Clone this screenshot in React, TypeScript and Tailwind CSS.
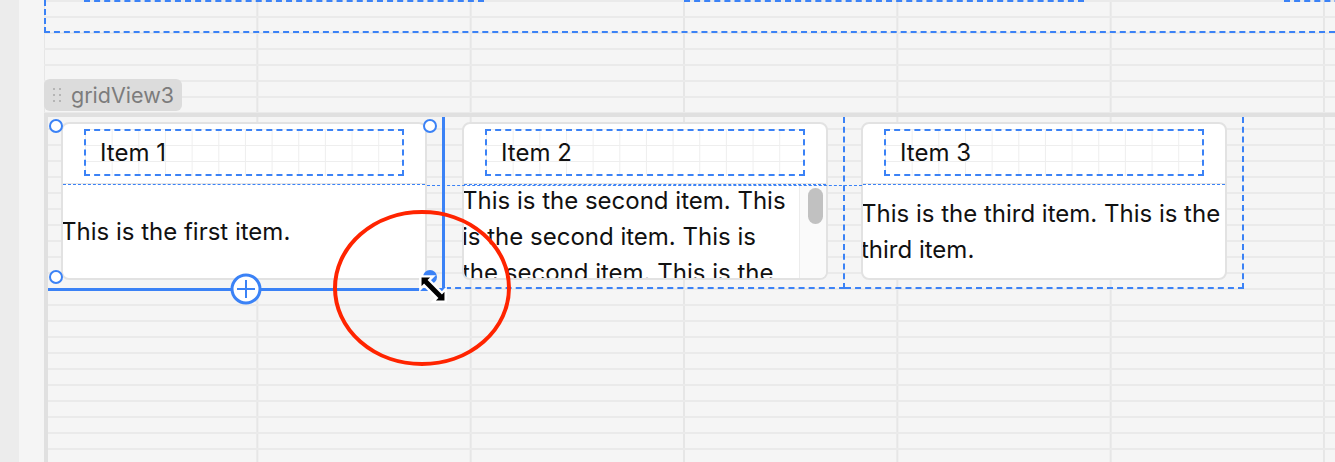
import React from "react";

function Handle({ filled = false, className = "" }: { filled?: boolean; className?: string }) {
  return (
    <div
      className={
        "absolute h-[14px] w-[14px] rounded-full border-2 border-[#3b82f6] " +
        (filled ? "bg-[#3b82f6] " : "bg-white ") +
        className
      }
    />
  );
}

function HeaderBox({ label }: { label: string }) {
  return (
    <div className="flex h-[47px] w-[320px] items-center border-2 border-dashed border-[#3b82f6] pl-[14px] [background-image:linear-gradient(to_right,#eeeeee_1px,transparent_1px),linear-gradient(to_bottom,#eeeeee_1px,transparent_1px)] [background-size:26.67px_100%,100%_16px] [background-position:-1px_0,0_-2px]">
      <span className="text-[24px] leading-[30px] text-[#111111]">{label}</span>
    </div>
  );
}

function Card({ label, children }: { label: string; children: React.ReactNode }) {
  return (
    <div className="flex h-[158px] w-[366px] flex-col overflow-hidden rounded-[8px] border-2 border-[#e2e2e2] bg-white">
      <div className="h-[60px] shrink-0 border-b border-[#e6e6e6] pl-[21px] pt-[5px]">
        <HeaderBox label={label} />
      </div>
      <div className="relative min-h-0 flex-1 border-t border-dashed border-[#3b82f6]">{children}</div>
    </div>
  );
}

export default function App() {
  return (
    <div className="relative flex h-[462px] w-[1335px] overflow-hidden bg-[#f5f5f5] font-['Inter','Noto_Sans',sans-serif]">
      <div className="w-[19px] shrink-0 bg-[#ececec]" />
      <div className="w-[25px] shrink-0 bg-[#f5f5f5]" />
      <div className="relative flex min-w-0 flex-1 flex-col [background-image:linear-gradient(to_bottom,#eaeaea_2px,transparent_2px),linear-gradient(to_right,#e6e6e6_2px,transparent_2px)] [background-size:100%_16px,213.33px_100%] [background-position:0_0px,-1px_0]">
        {/* top previous component */}
        <div className="h-[33px] shrink-0 border-b-2 border-l-2 border-dashed border-[#3b82f6]">
          <div className="flex gap-[200px] pl-[38px]">
            <div className="h-[2px] w-[400px] shrink-0 border-t-2 border-dashed border-[#3b82f6]" />
            <div className="h-[2px] w-[400px] shrink-0 border-t-2 border-dashed border-[#3b82f6]" />
            <div className="h-[2px] w-[400px] shrink-0 border-t-2 border-dashed border-[#3b82f6]" />
          </div>
        </div>

        {/* label */}
        <div className="mt-[46px] flex h-[32px] w-[138px] shrink-0 items-center rounded-[6px] bg-[#dcdcdc] pl-[9px]">
          <div className="grid grid-cols-2 gap-x-[4px] gap-y-[4px]">
            <span className="h-[2px] w-[2px] rounded-full bg-[#a8a8a8]" />
            <span className="h-[2px] w-[2px] rounded-full bg-[#a8a8a8]" />
            <span className="h-[2px] w-[2px] rounded-full bg-[#a8a8a8]" />
            <span className="h-[2px] w-[2px] rounded-full bg-[#a8a8a8]" />
            <span className="h-[2px] w-[2px] rounded-full bg-[#a8a8a8]" />
            <span className="h-[2px] w-[2px] rounded-full bg-[#a8a8a8]" />
          </div>
          <span className="ml-[10px] text-[21.5px] leading-[24px] text-[#7c7c7c]">gridView3</span>
        </div>

        {/* grid view container */}
        <div className="mt-[2px] flex flex-1 items-start border-l-4 border-t-4 border-[#e0e0e0]">
          {/* cell 1 (selected) */}
          <div className="relative h-[174px] w-[397px] shrink-0 border-b-[3px] border-r-[3px] border-[#3b82f6] pl-[13px] pt-[5px]">
            <Card label="Item 1">
              <div className="-ml-[2px] flex h-full items-center text-[24px] leading-[36px] text-[#111111]">
                This is the first item.
              </div>
            </Card>
            <Handle className="left-[1px] top-[2px]" />
            <Handle className="left-[375px] top-[2px]" />
            <Handle className="left-[1px] top-[153px]" />
            <Handle filled className="left-[375px] top-[153px]" />
            <svg className="absolute left-[182px] top-[156px]" width="32" height="32" viewBox="0 0 32 32">
              <circle cx="16" cy="16" r="14" fill="white" stroke="#3b82f6" strokeWidth="3" />
              <path d="M16 7 V25 M7 16 H25" stroke="#3b82f6" strokeWidth="2" />
            </svg>
          </div>

          {/* cell 2 */}
          <div className="relative h-[172px] w-[400px] shrink-0 border-b-2 border-r-2 border-dashed border-[#3b82f6] pl-[17px] pt-[5px]">
            <Card label="Item 2">
              <div className="flex h-full">
                <div className="-ml-[2px] mr-[4px] min-w-0 flex-1 overflow-hidden">
                  <p className="-mt-[2px] text-[24px] leading-[36px] text-[#111111]">
                    This is the second item. This is the second item. This is the second item. This is the second item.
                  </p>
                </div>
                <div className="w-[27px] shrink-0 border-l border-[#ececec] bg-[#fafafa] pl-[8px] pt-[3px]">
                  <div className="h-[36px] w-[15px] rounded-full bg-[#c1c1c1]" />
                </div>
              </div>
            </Card>
            <div className="absolute left-[-18px] top-[68px] w-[435px] border-t border-dashed border-[#3b82f6]" />
          </div>

          {/* cell 3 */}
          <div className="h-[172px] w-[399px] shrink-0 border-b-2 border-r-2 border-dashed border-[#3b82f6] pl-[16px] pt-[5px]">
            <Card label="Item 3">
              <div className="-ml-[2px] flex h-full items-center text-[24px] leading-[36px] text-[#111111]">
                <p>This is the third item. This is the third item.</p>
              </div>
            </Card>
          </div>
        </div>
      </div>

      {/* red annotation ellipse */}
      <svg className="pointer-events-none absolute left-[331px] top-[208px]" width="182" height="160" viewBox="0 0 182 160">
        <ellipse cx="91" cy="80" rx="87" ry="76" fill="none" stroke="#ff2400" strokeWidth="4" />
      </svg>

      {/* resize cursor */}
      <svg className="pointer-events-none absolute left-[417px] top-[273px]" width="32" height="32" viewBox="0 0 24 24">
        <path
          d="M2.5 2.5 L12 2.5 L9.2 5.3 L18.7 14.8 L21.5 12 L21.5 21.5 L12 21.5 L14.8 18.7 L5.3 9.2 L2.5 12 Z"
          fill="black"
          stroke="white"
          strokeWidth="1.8"
          strokeLinejoin="miter"
        />
      </svg>
    </div>
  );
}
